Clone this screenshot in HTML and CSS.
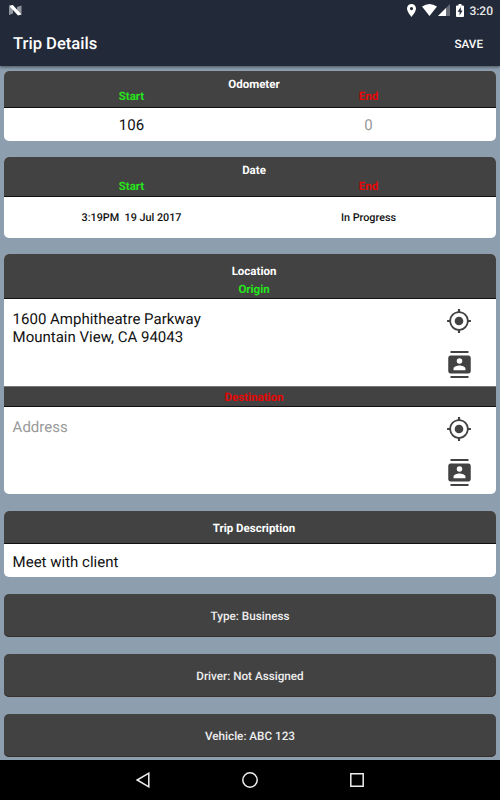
FILE: index.html
```html
<!DOCTYPE html>
<html lang="en">
<head>
<meta charset="utf-8">
<title>Trip Details</title>
<link rel="stylesheet" href="styles.css">
</head>
<body>
<svg width="0" height="0" class="defs">
  <symbol id="locate" viewBox="0 0 24 24"><path d="M12 8c-2.21 0-4 1.79-4 4s1.790 4 4 4 4-1.790 4-4-1.790-4-4-4zm8.940 3A8.994 8.994 0 0 0 13 3.060V1h-2v2.060A8.994 8.994 0 0 0 3.060 11H1v2h2.060A8.994 8.994 0 0 0 11 20.940V23h2v-2.060A8.994 8.994 0 0 0 20.940 13H23v-2h-2.060zM12 19.300c-4.030 0-7.300-3.270-7.300-7.300s3.270-7.300 7.300-7.300 7.300 3.270 7.300 7.300-3.270 7.300-7.300 7.300z"/></symbol>
  <symbol id="contact" viewBox="0 0 24 24"><path d="M20 0H4v1.700h16V0zM4 24h16v-1.700H4V24zM20 4H4c-1.100 0-2 .9-2 2v12c0 1.100.9 2 2 2h16c1.100 0 2-.9 2-2V6c0-1.100-.9-2-2-2zm-8 2.400a2.450 2.450 0 1 1 0 4.900 2.450 2.450 0 0 1 0-4.900zM17.300 17H6.700v-1.500c0-1.670 3.530-2.700 5.300-2.700s5.300 1.030 5.300 2.700V17z"/></symbol>
</svg>
<header class="top">
  <div class="status">
    <svg class="n-logo" width="13" height="11" viewBox="0 0 13 11"><path d="M0 1.200 4 3v5.500L0 10zM8 2l4.500-1.500V9.500L8 8z" fill="#92969e"/><path d="M0 .800 3.800 0 12.500 9.500 9 10.500z" fill="#fff"/></svg>
    <div class="indicators">
      <svg class="pin" width="9" height="13" viewBox="5 2 14 20"><path d="M12 2C8.130 2 5 5.130 5 9c0 5.250 7 13 7 13s7-7.750 7-13c0-3.870-3.130-7-7-7zm0 9.500a2.500 2.500 0 1 1 0-5 2.500 2.500 0 0 1 0 5z" fill="#fff"/></svg>
      <svg class="wifi" width="15" height="12" viewBox="0 0 15 12"><path d="M0 2.600Q7.500-2.600 15 2.600L7.500 12z" fill="#fff"/></svg>
      <svg class="signal" width="12" height="12" viewBox="0 0 12 12"><path d="M12 0v12H0z" fill="#686d78"/><path d="M8 4v8H0z" fill="#fff"/></svg>
      <svg class="battery" width="8" height="13" viewBox="0 0 8 13"><path d="M2.500 0h3v1.500H7q1 0 1 1V12q0 1-1 1H1q-1 0-1-1V2.500q0-1 1-1h1.500z" fill="#fff"/><path d="M4.800 3 1.600 7.800h2V11.500l3-5h-1.800z" fill="#222938"/></svg>
      <span class="clock">3:20</span>
    </div>
  </div>
  <div class="appbar"><h1>Trip Details</h1><span class="save">SAVE</span></div>
</header>
<main>
  <section class="card odometer">
    <div class="head"><h2>Odometer</h2><div class="cols"><b class="start">Start</b><b class="end">End</b></div></div>
    <div class="cols values"><span>106</span><span class="hint">0</span></div>
  </section>
  <section class="card date">
    <div class="head"><h2>Date</h2><div class="cols"><b class="start">Start</b><b class="end">End</b></div></div>
    <div class="cols values"><span>3:19PM&nbsp; 19 Jul 2017</span><span>In Progress</span></div>
  </section>
  <section class="card location">
    <div class="head"><h2>Location</h2><b class="start">Origin</b></div>
    <div class="place origin"><p>1600 Amphitheatre Parkway<br>Mountain View, CA 94043</p>
      <div class="actions"><svg class="loc"><use href="#locate"/></svg><svg class="con"><use href="#contact"/></svg></div></div>
    <div class="subhead"><b class="end">Destination</b></div>
    <div class="place"><p class="hint">Address</p>
      <div class="actions"><svg class="loc"><use href="#locate"/></svg><svg class="con"><use href="#contact"/></svg></div></div>
  </section>
  <section class="card trip">
    <div class="head"><h2>Trip Description</h2></div>
    <p class="desc">Meet with client</p>
  </section>
  <div class="button">Type: Business</div>
  <div class="button">Driver: Not Assigned</div>
  <div class="button">Vehicle: ABC 123</div>
</main>
<nav>
  <svg width="14" height="16" viewBox="0 0 14 16"><path d="M12.800 1.200v13.600L1.200 8z"/></svg>
  <svg width="16" height="16" viewBox="0 0 16 16"><circle cx="8" cy="8" r="7.200"/></svg>
  <svg width="14" height="14" viewBox="0 0 14 14"><path d="M.8.800h12.400v12.400H.8z"/></svg>
</nav>
</body>
</html>
```
FILE: styles.css
```css
* { box-sizing: border-box; margin: 0; }
body {
  width: 500px;
  height: 800px;
  overflow: hidden;
  display: flex;
  flex-direction: column;
  background: #8d9eaf;
  font-family: Roboto, sans-serif;
  text-rendering: geometricPrecision;
  color: #111;
}
svg { display: block; flex: none; }
.defs { position: absolute; }
.top {
  height: 66px;
  flex: none;
  background: #222938;
  color: #fff;
  box-shadow: 0 1px 3px rgba(0, 0, 0, .5);
}
.status { height: 20px; display: flex; justify-content: space-between; padding: 0 7px 0 9px; }
.n-logo { margin-top: 5px; }
.indicators { display: flex; align-items: flex-start; padding-top: 4px; }
.pin { margin-right: 1px; }
.wifi { margin-left: 5px; }
.signal { margin-left: 1px; }
.battery { margin-left: 6px; }
.clock { margin-left: 5px; font-size: 12px; line-height: 14px; font-weight: 500; color: #e8e9eb; }
.appbar { height: 48px; display: flex; align-items: center; justify-content: space-between; padding: 0 17px 0 13px; }
h1 { font-size: 16.600px; font-weight: 500; padding-top: 1px; }
.save { font-size: 11.700px; font-weight: 500; }
main { flex: 1; min-height: 0; padding: 5px 4px 0; overflow: hidden; }
.card { background: #fff; border-radius: 5px; overflow: hidden; margin-bottom: 17px; }
.head { background: #424242; border-bottom: 1px solid #111; text-align: center; }
h2 { font-size: 11.500px; line-height: 14px; font-weight: 700; color: #fff; padding-left: 8px; }
b { font-size: 11.500px; line-height: 14px; display: block; }
.start { color: #26e51b; }
.end { color: #e60505; }
.cols { display: grid; grid-template-columns: 1fr 1fr; padding: 0 9px; text-align: center; }
.hint { color: #999; }
.odometer { height: 70px; margin-bottom: 16px; }
.odometer .head { height: 37px; padding-top: 6px; }
.odometer h2 { height: 12px; }
.odometer .values { font-size: 15px; line-height: 35px; }
.date { height: 81px; margin-bottom: 16px; }
.date .head { height: 40px; padding-top: 6px; }
.date h2 { height: 16px; }
.date .values { font-size: 10.800px; line-height: 42px; font-weight: 500; }
.location { height: 240px; }
.location .head { height: 45px; padding-top: 10px; }
.location h2 { height: 18px; }
.location b { padding-left: 8px; }
.subhead { height: 21px; background: #424242; border-top: 1px solid #777; border-bottom: 1px solid #111; text-align: center; padding-top: 3px; }
.place { height: 87px; padding: 11px 24px 0 8.600px; display: flex; justify-content: space-between; font-size: 15px; line-height: 17.500px; }
.place p { padding-top: 1px; }
.actions { display: flex; flex-direction: column; align-items: center; width: 26px; margin-top: -2px; }
.loc { width: 26px; height: 26px; fill: #424242; }
.con { width: 27px; height: 27px; fill: #424242; margin-top: 17px; }
.trip { height: 66px; }
.trip .head { height: 33px; padding-top: 10px; }
.desc { padding-left: 8.600px; font-size: 15px; line-height: 36px; }
.button { height: 43px; line-height: 44px; margin-bottom: 17px; border-radius: 5px; background: #424242; color: #eee; font-size: 11.700px; font-weight: 500; text-align: center; box-shadow: inset 0 -1px #3a302d; }
nav { height: 40px; flex: none; background: #000; display: flex; align-items: center; justify-content: center; gap: 92px; }
nav svg { fill: none; stroke: #eee; stroke-width: 1.500; }
```
